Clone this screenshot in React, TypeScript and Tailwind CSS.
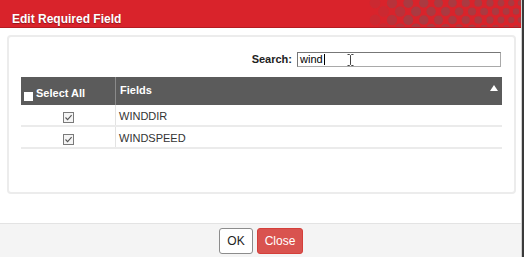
import React from "react"

const rows = ["WINDDIR", "WINDSPEED"]

// halftone dots on the right side of the title bar
const Dots = () => {
  const circles: React.ReactNode[] = []
  let x = 6
  for (let c = 0; c < 12; c++) {
    const step = Math.max(9.5, 17 - c * 0.75)
    const rad = Math.max(3, 5.4 - c * 0.22)
    const op = c === 0 ? 0.12 : c === 1 ? 0.3 : 0.42
    for (let r = 0; r < 4; r++) {
      const cx = x + (r % 2 ? step / 2 : 0)
      const cy = 3 + r * 8.5
      circles.push(<circle key={`${c}-${r}`} cx={cx} cy={cy} r={rad} fill="#6a5a60" fillOpacity={op} />)
    }
    x += step
  }
  return (
    <svg width="152" height="27" viewBox="0 0 152 27" className="absolute right-0 top-0">
      {circles}
    </svg>
  )
}

const CheckedBox = () => (
  <svg width="11" height="11" viewBox="0 0 11 11">
    <rect x="0.5" y="0.5" width="10" height="10" fill="#f4f4f4" stroke="#7a7a7a" />
    <path d="M2.5 5.5 L4.6 7.6 L8.6 3.2" fill="none" stroke="#555" strokeWidth="1.1" />
  </svg>
)

export default function App() {
  return (
    <div className="flex h-[257px] w-[524px] bg-[#3a3a3a]" style={{ fontFamily: '"Liberation Sans", Arial, sans-serif' }}>
      <div className="flex w-[522px] flex-col border-r border-[#d0d0d0] bg-white">
        {/* Header */}
        <div className="relative h-[28px] border-b border-[#b51c22] bg-[#d9232b] pl-[12px] pt-[6px]">
          <Dots />
          <span className="relative text-[12px] font-bold text-white [text-shadow:0_1px_1px_rgba(0,0,0,0.35)]">Edit Required Field</span>
        </div>

        {/* Body */}
        <div className="h-[195px] px-[7px] pt-[7px]">
          <div className="h-[159px] w-[509px] rounded-[4px] border-2 border-[#ececec] px-[12px] pt-[14px]">
            <div className="flex items-center justify-end pr-[1px]">
              <span className="mr-[5px] text-[11px] font-bold text-[#222]">Search:</span>
              <div className="relative flex h-[15px] w-[204px] items-center border border-[#a9a9a9] border-l-[#777] border-t-[#777] pl-[2px]">
                <span className="text-[11px] text-black">wind</span>
                <span className="ml-[1px] h-[11px] w-px bg-black" />
                <svg width="7" height="12" viewBox="0 0 7 12" className="absolute left-[49px] top-[1px]">
                  <path d="M0.5 0.5 H2.5 L3.5 1.5 L4.5 0.5 H6.5 M3.5 1.5 V10.5 M0.5 11.5 H2.5 L3.5 10.5 L4.5 11.5 H6.5" fill="none" stroke="#444" strokeWidth="1" />
                </svg>
              </div>
            </div>

            <div className="mt-[9px] w-[481px]">
              <div className="flex h-[28px] bg-[#5b5b5b] text-[11px] font-bold text-white">
                <div className="flex w-[95px] items-end border-r border-[#8a8a8a] pb-[3px] pl-[3px]">
                  <span className="mb-[1px] mr-[3px] h-[9px] w-[9px] bg-white" />
                  <span>Select All</span>
                </div>
                <div className="relative flex flex-1 items-center pl-[4px] pb-[1px]">
                  Fields
                  <svg width="8" height="6" viewBox="0 0 8 6" className="absolute right-[4px] top-[8px]">
                    <path d="M0 6 L4 0 L8 6 Z" fill="#fff" />
                  </svg>
                </div>
              </div>
              {rows.map(name => (
                <div key={name} className="flex h-[22px] border-b-2 border-[#ebebeb] text-[11px] text-[#333]">
                  <div className="flex w-[95px] items-center justify-center border-r border-[#e3e3e3] pt-[5px]">
                    <CheckedBox />
                  </div>
                  <div className="flex-1 pl-[3px] pt-[3px]">{name}</div>
                </div>
              ))}
            </div>
          </div>
        </div>

        {/* Footer */}
        <div className="flex flex-1 justify-center gap-[4px] border-t border-[#e3e3e3] bg-[#f4f4f4] pt-[4px]">
          <button className="ml-[1px] h-[26px] w-[34px] rounded-[3px] border border-[#8c8c8c] bg-white text-[12px] text-[#222]">OK</button>
          <button className="h-[26px] w-[46px] rounded-[3px] border border-[#d43f3a] bg-[#d9534f] text-[12px] text-white">Close</button>
        </div>
      </div>
    </div>
  )
}
